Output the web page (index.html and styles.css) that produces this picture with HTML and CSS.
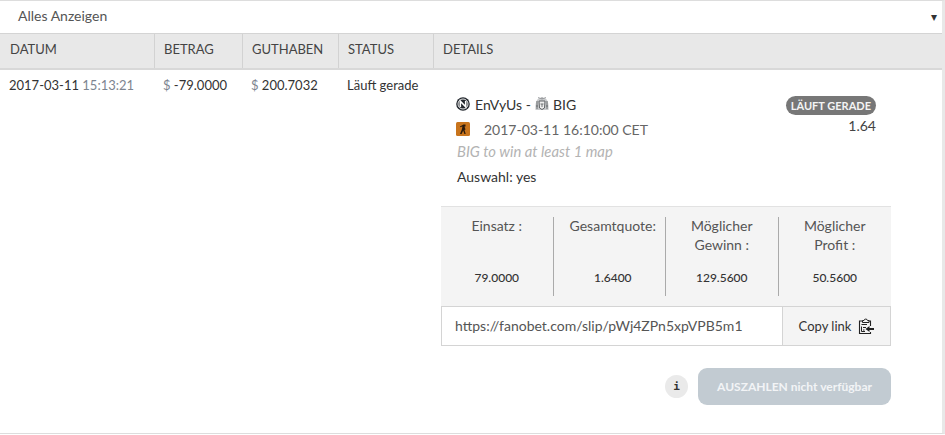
FILE: index.html
```html
<!DOCTYPE html>
<html lang="de">
<head>
  <meta charset="UTF-8">
  <title>Wetten</title>
  <link rel="stylesheet" href="styles.css">
</head>
<body>
  <div class="panel">
    <div class="filter">
      <span>Alles Anzeigen</span>
      <span class="caret">▾</span>
    </div>
    <div class="row head">
      <div class="col c1">DATUM</div>
      <div class="col c2">BETRAG</div>
      <div class="col c3">GUTHABEN</div>
      <div class="col c4">STATUS</div>
      <div class="col c5">DETAILS</div>
    </div>
    <div class="row body-row">
      <div class="cell c1">2017-03-11 <span class="muted">15:13:21</span></div>
      <div class="cell c2"><span class="muted">$</span> -79.0000</div>
      <div class="cell c3"><span class="muted">$</span> 200.7032</div>
      <div class="cell c4">Läuft gerade</div>
      <div class="cell c5">
        <div class="slip">
          <div class="event">
            <div class="event-info">
              <div class="teams">
                <svg class="logo" width="14" height="14" viewBox="0 0 14 14">
                  <circle cx="7" cy="7" r="6.8" fill="#23282e"/>
                  <circle cx="7" cy="7" r="5" fill="none" stroke="#fff" stroke-width=".9"/>
                  <path d="M4.3 10V4.2L9.7 9.8V4" fill="none" stroke="#fff" stroke-width="1.6"/>
                </svg>
                <span class="team-name">EnVyUs -</span>
                <svg class="logo" width="16" height="16" viewBox="0 0 16 16">
                  <path d="M1.5 14C1 8 2 1.5 8 1.5S15 8 14.500 14Z" fill="#c9cbcd"/>
                  <path d="M8 3L4 1.500M8 3L12 1.500M8 3V1" stroke="#8b8e91" stroke-width=".8"/>
                  <path d="M5 5H11L10.500 12L8 13.500L5.500 12Z" fill="#eee" stroke="#5f6366" stroke-width="1"/>
                  <path d="M3 5V13M13 5V13M6.500 8H9.500M8 8V11M2 10H4M12 10H14" stroke="#62666a" stroke-width=".9"/>
                </svg>
                <span>BIG</span>
              </div>
              <div class="game">
                <svg class="game-icon" width="14" height="14" viewBox="0 0 14 14">
                  <rect width="14" height="14" rx="1.5" fill="#c8741c"/>
                  <path d="M7.500 2.500h2v2h-1l1 3-1 .6 1.200 3.900H8.400L7.200 8.600 5.600 12H4l2-5 .4-2.500-2.400.8V4.600Z" fill="#2b1a0b"/>
                </svg>
                <span>2017-03-11 16:10:00 CET</span>
              </div>
              <div class="market">BIG to win at least 1 map</div>
              <div class="pick">Auswahl: yes</div>
            </div>
            <div class="event-side">
              <span class="badge">LÄUFT GERADE</span>
              <span class="odds">1.64</span>
            </div>
          </div>
          <div class="summary">
            <div class="sum-col">
              <div class="sum-label">Einsatz :</div>
              <div class="sum-value">79.0000</div>
            </div>
            <div class="sum-col">
              <div class="sum-label">Gesamtquote:</div>
              <div class="sum-value">1.6400</div>
            </div>
            <div class="sum-col">
              <div class="sum-label">Möglicher Gewinn :</div>
              <div class="sum-value">129.5600</div>
            </div>
            <div class="sum-col">
              <div class="sum-label">Möglicher Profit :</div>
              <div class="sum-value">50.5600</div>
            </div>
          </div>
          <div class="link-row">
            <div class="link-text">https://fanobet.com/slip/pWj4ZPn5xpVPB5m1</div>
            <div class="copy">
              <span>Copy link</span>
              <svg width="16" height="17" viewBox="0 0 16 17">
                <path d="M4.500 3H1.500V15.500H12.500V14M11 3H12.500V8" fill="none" stroke="#222" stroke-width="1.100"/>
                <path d="M4.500 4.500V2.500H6C6 .6 9.500 .6 9.500 2.500H11V4.500Z" fill="none" stroke="#222" stroke-width="1"/>
                <path d="M3.500 6.500H9M3.500 8.500V13.500H7M5 9.500H8M5 12H6.500" fill="none" stroke="#222" stroke-width="1"/>
                <path d="M16 10H11.500V8L7.500 11L11.500 14V12H16Z" fill="#222"/>
              </svg>
            </div>
          </div>
          <div class="actions">
            <span class="info">i</span>
            <button class="cashout" disabled>AUSZAHLEN nicht verfügbar</button>
          </div>
        </div>
      </div>
    </div>
  </div>
</body>
</html>
```

FILE: styles.css
```css
html, body {
  margin: 0;
  padding: 0;
}
body {
  font-family: Lato, "Open Sans", Arial, sans-serif;
  font-size: 13px;
  color: #333;
  background: #fff;
}
.panel {
  width: 945px;
  height: 434px;
  box-sizing: border-box;
  border-top: 1px solid #ddd;
  border-right: 3px solid #e8e8e8;
  border-bottom: 1px solid #ddd;
  overflow: hidden;
}
.filter {
  height: 32px;
  box-sizing: border-box;
  padding: 6px 5px 0 18px;
  display: flex;
  justify-content: space-between;
  font-size: 14px;
  color: #555;
}
.caret {
  font-size: 12px;
  line-height: 20px;
  color: #333;
}
.row {
  display: flex;
}
.head {
  height: 37px;
  box-sizing: border-box;
  background: #e8e8e8;
  border-top: 1px solid #d4d4d4;
  border-bottom: 2px solid #d8d8d8;
}
.col {
  box-sizing: border-box;
  padding: 7px 0 0 9px;
  height: 34px;
  border-right: 1px solid #d2d2d2;
  color: #444;
}
.col:last-child {
  border-right: none;
}
.c1 { width: 154px; }
.c2 { width: 88px; }
.c3 { width: 96px; }
.c4 { width: 95px; }
.c5 { flex: 1; }
.col.c1 {
  width: 155px;
  padding-left: 10px;
}
.cell {
  box-sizing: border-box;
  padding: 7px 0 0 9px;
}
.muted {
  color: #7d8590;
}
.cell.c5 {
  padding: 0;
}
.slip {
  margin-left: 8px;
  width: 450px;
  padding-top: 25px;
}
.event {
  display: flex;
  justify-content: space-between;
  padding: 0 15px 0 15px;
  height: 111px;
  font-size: 14px;
}
.teams, .game {
  display: flex;
  align-items: center;
}
.teams {
  height: 20px;
  gap: 4px;
  margin-top: -1px;
}
.team-name {
  margin-left: 1px;
}
.teams .logo + span + .logo {
  margin: 0 -1px;
}
.game {
  height: 20px;
  margin-top: 5px;
  color: #666;
  gap: 14px;
}
.market {
  margin: 4px 0 0 1px;
  font-size: 14.8px;
  font-style: italic;
  color: #b3b3b3;
  line-height: 17px;
}
.pick {
  margin: 8px 0 0 1px;
  line-height: 17px;
}
.event-side {
  display: flex;
  flex-direction: column;
  align-items: flex-end;
}
.badge {
  background: #777;
  color: #f4f4f4;
  font-size: 11px;
  font-weight: 700;
  line-height: 19px;
  padding: 0 5px;
  border-radius: 10px;
  margin-top: 1px;
}
.odds {
  line-height: 17px;
  margin-top: 2px;
  color: #444;
}
.summary {
  display: grid;
  grid-template-columns: repeat(4, 1fr);
  height: 100px;
  box-sizing: border-box;
  padding: 10px 0 10px;
  background: #f4f4f4;
  border-top: 1px solid #e2e2e2;
}
.sum-col {
  display: flex;
  flex-direction: column;
  justify-content: space-between;
  text-align: center;
  border-right: 1px solid #aaa;
  padding: 0 10px;
  color: #555;
}
.sum-col:nth-child(2) {
  padding-left: 15px;
  padding-right: 8px;
}
.sum-col:last-child {
  border-right: none;
}
.sum-label {
  font-size: 14px;
  line-height: 19px;
  margin-top: -1px;
}
.sum-value {
  font-size: 12px;
  font-weight: 500;
  color: #333;
  padding-bottom: 10px;
  line-height: 17px;
}
.link-row {
  display: flex;
  height: 40px;
  box-sizing: border-box;
  border: 1px solid #d4d4d4;
}
.link-text {
  flex: 1;
  padding: 10px 0 0 13px;
  font-size: 14px;
  color: #555;
}
.copy {
  width: 107px;
  background: #f4f4f4;
  border-left: 1px solid #d4d4d4;
  display: flex;
  align-items: center;
  justify-content: center;
  gap: 7px;
  color: #333;
}
.actions {
  display: flex;
  justify-content: flex-end;
  align-items: center;
  gap: 10px;
  margin-top: 22px;
}
.info {
  width: 23px;
  height: 23px;
  border-radius: 50%;
  background: #eaeaea;
  font-family: "DejaVu Sans Mono", monospace;
  font-size: 11px;
  font-weight: 700;
  color: #333;
  display: flex;
  align-items: center;
  justify-content: center;
}
.cashout {
  width: 193px;
  height: 37px;
  border: none;
  border-radius: 9px;
  background: #c2cbd2;
  color: #f2f4f6;
  font-family: inherit;
  font-size: 12px;
  font-weight: 700;
}
```
